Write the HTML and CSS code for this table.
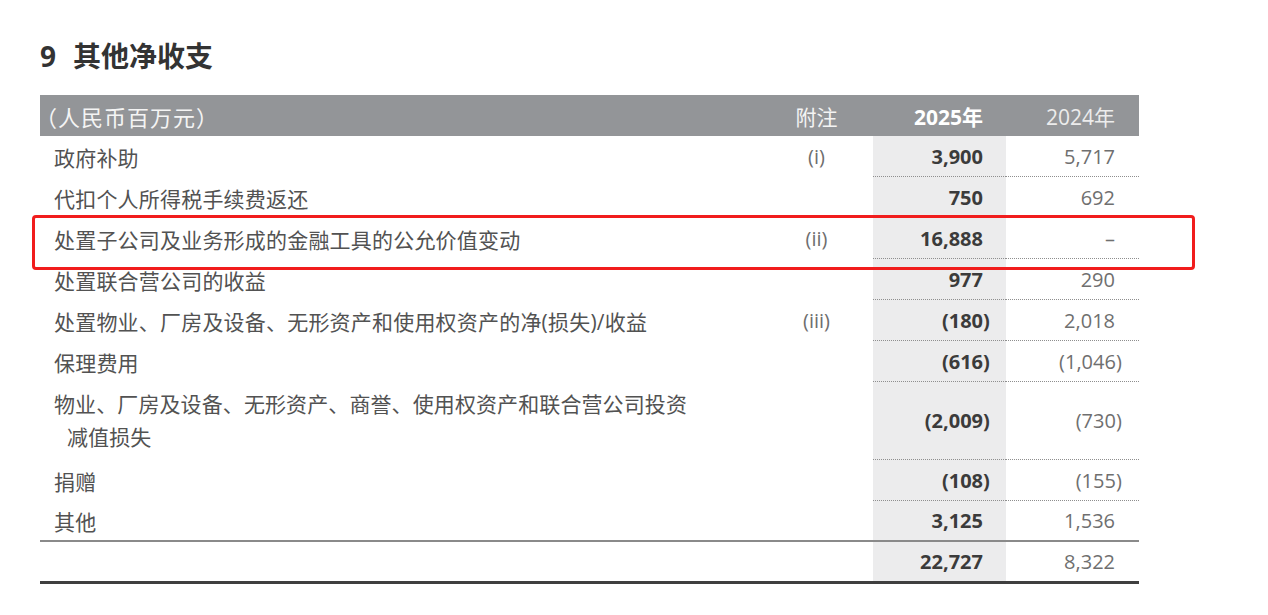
FILE: index.html
```html
<!DOCTYPE html>
<html lang="zh-CN">
<head>
<meta charset="utf-8">
<title>其他净收支</title>
<link rel="stylesheet" href="styles.css">
</head>
<body>
<div class="page">
  <h1 class="title"><span class="title-num">9</span><span>其他净收支</span></h1>
  <div class="table-wrap">
    <table class="fin">
      <colgroup>
        <col class="c-label">
        <col class="c-note">
        <col class="c-cur">
        <col class="c-prev">
      </colgroup>
      <thead>
        <tr>
          <th class="label"><span class="unit">（人民币百万元）</span></th>
          <th class="note">附注</th>
          <th class="cur">2025年</th>
          <th class="prev">2024年</th>
        </tr>
      </thead>
      <tbody>
        <tr>
          <td class="label">政府补助</td>
          <td class="note">(i)</td>
          <td class="cur dot">3,900</td>
          <td class="prev dot">5,717</td>
        </tr>
        <tr>
          <td class="label">代扣个人所得税手续费返还</td>
          <td class="note"></td>
          <td class="cur dot">750</td>
          <td class="prev dot">692</td>
        </tr>
        <tr>
          <td class="label">处置子公司及业务形成的金融工具的公允价值变动</td>
          <td class="note">(ii)</td>
          <td class="cur dot">16,888</td>
          <td class="prev dot">–</td>
        </tr>
        <tr>
          <td class="label">处置联合营公司的收益</td>
          <td class="note"></td>
          <td class="cur dot">977</td>
          <td class="prev dot">290</td>
        </tr>
        <tr>
          <td class="label">处置物业、厂房及设备、无形资产和使用权资产的净(损失)/收益</td>
          <td class="note">(iii)</td>
          <td class="cur dot">(180<span class="rp">)</span></td>
          <td class="prev dot">2,018</td>
        </tr>
        <tr>
          <td class="label">保理费用</td>
          <td class="note"></td>
          <td class="cur dot">(616<span class="rp">)</span></td>
          <td class="prev dot">(1,046<span class="rp">)</span></td>
        </tr>
        <tr class="tall">
          <td class="label wrap">物业、厂房及设备、无形资产、商誉、使用权资产和联合营公司投资<br>减值损失</td>
          <td class="note"></td>
          <td class="cur dot">(2,009<span class="rp">)</span></td>
          <td class="prev dot">(730<span class="rp">)</span></td>
        </tr>
        <tr>
          <td class="label">捐赠</td>
          <td class="note"></td>
          <td class="cur dot">(108<span class="rp">)</span></td>
          <td class="prev dot">(155<span class="rp">)</span></td>
        </tr>
        <tr class="sub">
          <td class="label">其他</td>
          <td class="note"></td>
          <td class="cur">3,125</td>
          <td class="prev">1,536</td>
        </tr>
        <tr class="total">
          <td class="label"></td>
          <td class="note"></td>
          <td class="cur">22,727</td>
          <td class="prev">8,322</td>
        </tr>
      </tbody>
    </table>
    <div class="highlight"></div>
  </div>
</div>
</body>
</html>
```

FILE: styles.css
```css
html, body {
  margin: 0;
  padding: 0;
  background: #ffffff;
}

body {
  font-family: "Open Sans", "Noto Sans CJK SC", sans-serif;
  color: #505050;
}

.page {
  padding: 36px 40px 0 40px;
  width: 1099px;
}

.title {
  margin: 0 0 19px 0;
  height: 40px;
  line-height: 40px;
  font-size: 28px;
  font-weight: 700;
  color: #333333;
  display: flex;
  gap: 17px;
  align-items: center;
}

.title-num {
  font-family: "Open Sans", sans-serif;
}

.table-wrap {
  position: relative;
}

.fin {
  width: 1099px;
  border-collapse: separate;
  border-spacing: 0;
  table-layout: fixed;
  font-size: 20px;
}

.c-label { width: 720px; }
.c-note { width: 113px; }
.c-cur { width: 133px; }
.c-prev { width: 133px; }

.fin th,
.fin td {
  box-sizing: border-box;
  padding: 0;
  height: 41px;
  vertical-align: middle;
  white-space: nowrap;
}

.fin thead th {
  background: #939598;
  color: #f4f4f4;
  font-weight: 400;
  font-size: 21px;
}

.fin thead th.label {
  text-align: left;
}

.unit {
  display: inline-block;
  margin-left: -5px;
  font-size: 22px;
  letter-spacing: 1px;
}

.fin thead th.cur {
  font-weight: 700;
  color: #ffffff;
  text-align: right;
  padding-right: 23px;
}

.fin thead th.prev {
  text-align: right;
  padding-right: 24px;
  color: #ececec;
}

.fin thead th.note {
  text-align: center;
}

.fin td.label {
  font-size: 21px;
  color: #525252;
  padding-left: 14px;
  text-align: left;
  letter-spacing: 0.2px;
}

.fin td.label.wrap {
  white-space: normal;
  line-height: 33px;
  padding-left: 27px;
  text-indent: -13px;
  letter-spacing: 0.1px;
}

.fin td.note {
  text-align: center;
  color: #6e6e6e;
}

.fin td.cur {
  background: #ececed;
  text-align: right;
  padding-right: 23px;
  font-weight: 700;
  color: #3b3b3b;
}

.fin td.prev {
  text-align: right;
  padding-right: 24px;
  color: #6f6f6f;
}

.fin td.dot {
  border-bottom: 1px dotted #8e8e8e;
}

.rp {
  margin-right: -0.34em;
}

.fin tr.tall td {
  height: 78px;
}

.fin tr.sub td {
  border-bottom: 2px solid #8a8a8a;
}

.fin tr.total td {
  height: 42px;
  border-bottom: 3px solid #3f3f3f;
}

.highlight {
  position: absolute;
  left: -8px;
  top: 120px;
  width: 1163px;
  height: 55px;
  box-sizing: border-box;
  border: 3px solid #f11d1d;
  border-radius: 4px;
  pointer-events: none;
}
```
